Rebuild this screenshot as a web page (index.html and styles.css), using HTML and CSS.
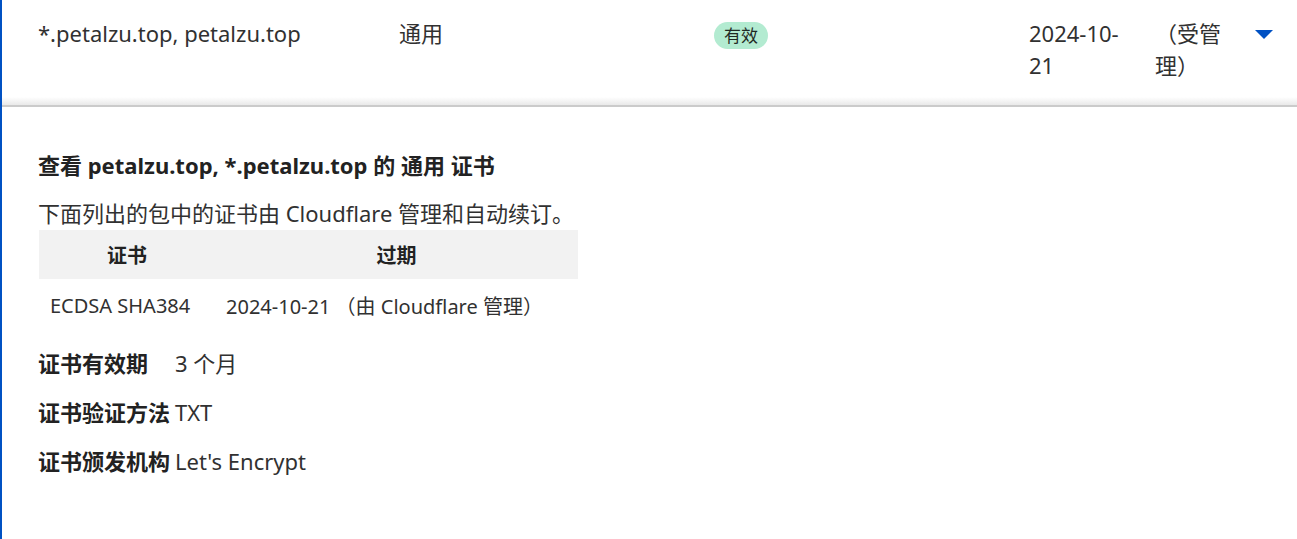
FILE: index.html
```html
<!DOCTYPE html>
<html lang="zh">
<head>
<meta charset="utf-8">
<link rel="stylesheet" href="styles.css">
</head>
<body>
<div class="page">
  <div class="row">
    <div class="cell c-host">*.petalzu.top, petalzu.top</div>
    <div class="cell c-type">通用</div>
    <div class="cell c-status"><span class="badge">有效</span></div>
    <div class="cell c-date"><span class="wrap-date">2024-10-21</span></div>
    <div class="cell c-managed"><span class="wrap-managed">（受管理）</span></div>
    <div class="cell c-caret"><span class="caret"></span></div>
  </div>
  <div class="divider"></div>
  <div class="detail">
    <h3 class="title">查看 petalzu.top, *.petalzu.top 的 通用 证书</h3>
    <p class="desc">下面列出的包中的证书由 Cloudflare 管理和自动续订。</p>
    <table class="certs">
      <thead>
        <tr><th class="col1">证书</th><th class="col2">过期</th></tr>
      </thead>
      <tbody>
        <tr><td>ECDSA SHA384</td><td>2024-10-21 （由 Cloudflare 管理）</td></tr>
      </tbody>
    </table>
    <div class="info"><span class="label">证书有效期</span><span class="value">3 个月</span></div>
    <div class="info"><span class="label">证书验证方法</span><span class="value">TXT</span></div>
    <div class="info"><span class="label">证书颁发机构</span><span class="value">Let's Encrypt</span></div>
  </div>
</div>
</body>
</html>
```

FILE: styles.css
```css
html, body {
  margin: 0;
  padding: 0;
  background: #fff;
}
body {
  font-family: "Noto Sans", "Noto Sans CJK SC", sans-serif;
  color: #313131;
  font-size: 22px;
}
.page {
  border-left: 2px solid #0051c3;
  min-height: 539px;
  box-sizing: border-box;
}
.row {
  display: flex;
  align-items: flex-start;
  padding: 17px 0 0 36px;
  height: 97px;
  box-sizing: border-box;
  line-height: 32px;
}
.cell { flex: none; }
.c-host { width: 361px; }
.c-type { width: 315px; }
.c-status { width: 315px; }
.c-date { width: 126px; }
.c-date .wrap-date { display: block; width: 100px; }
.c-managed { width: 100px; }
.c-managed .wrap-managed { display: block; width: 70px; }
.c-caret { width: 30px; }
.badge {
  display: inline-block;
  background: #b3ebd1;
  color: #1f2a24;
  font-size: 17px;
  line-height: 27px;
  padding: 0 10px;
  border-radius: 14px;
  vertical-align: top;
  margin-top: 5px;
}
.caret {
  display: block;
  width: 0;
  height: 0;
  border-left: 9px solid transparent;
  border-right: 9px solid transparent;
  border-top: 9px solid #0051c3;
  margin-top: 13px;
}
.divider {
  height: 8px;
  background: linear-gradient(#ffffff, #e9e9e9);
  border-bottom: 2px solid #cbcbcb;
}
.detail {
  padding: 42px 0 0 36px;
}
.title {
  margin: 0;
  font-size: 22px;
  font-weight: 700;
  line-height: 32px;
  color: #222;
}
.desc {
  margin: 16px 0 0;
  line-height: 32px;
}
.certs {
  border-collapse: collapse;
  font-size: 20px;
  width: 539px;
  margin: 1px 0 0 1px;
}
.certs th {
  background: #f2f2f2;
  height: 49px;
  padding: 0;
  font-weight: 700;
  text-align: center;
  color: #222;
}
.certs .col1 { width: 176px; }
.certs td {
  padding: 0 0 0 11px;
  height: 52px;
  text-align: left;
  white-space: nowrap;
}
.info {
  margin-top: 15px;
  line-height: 34px;
}
.label {
  display: inline-block;
  min-width: 134px;
  font-weight: 700;
  color: #222;
}
.value {
  margin-left: 3px;
}
```
